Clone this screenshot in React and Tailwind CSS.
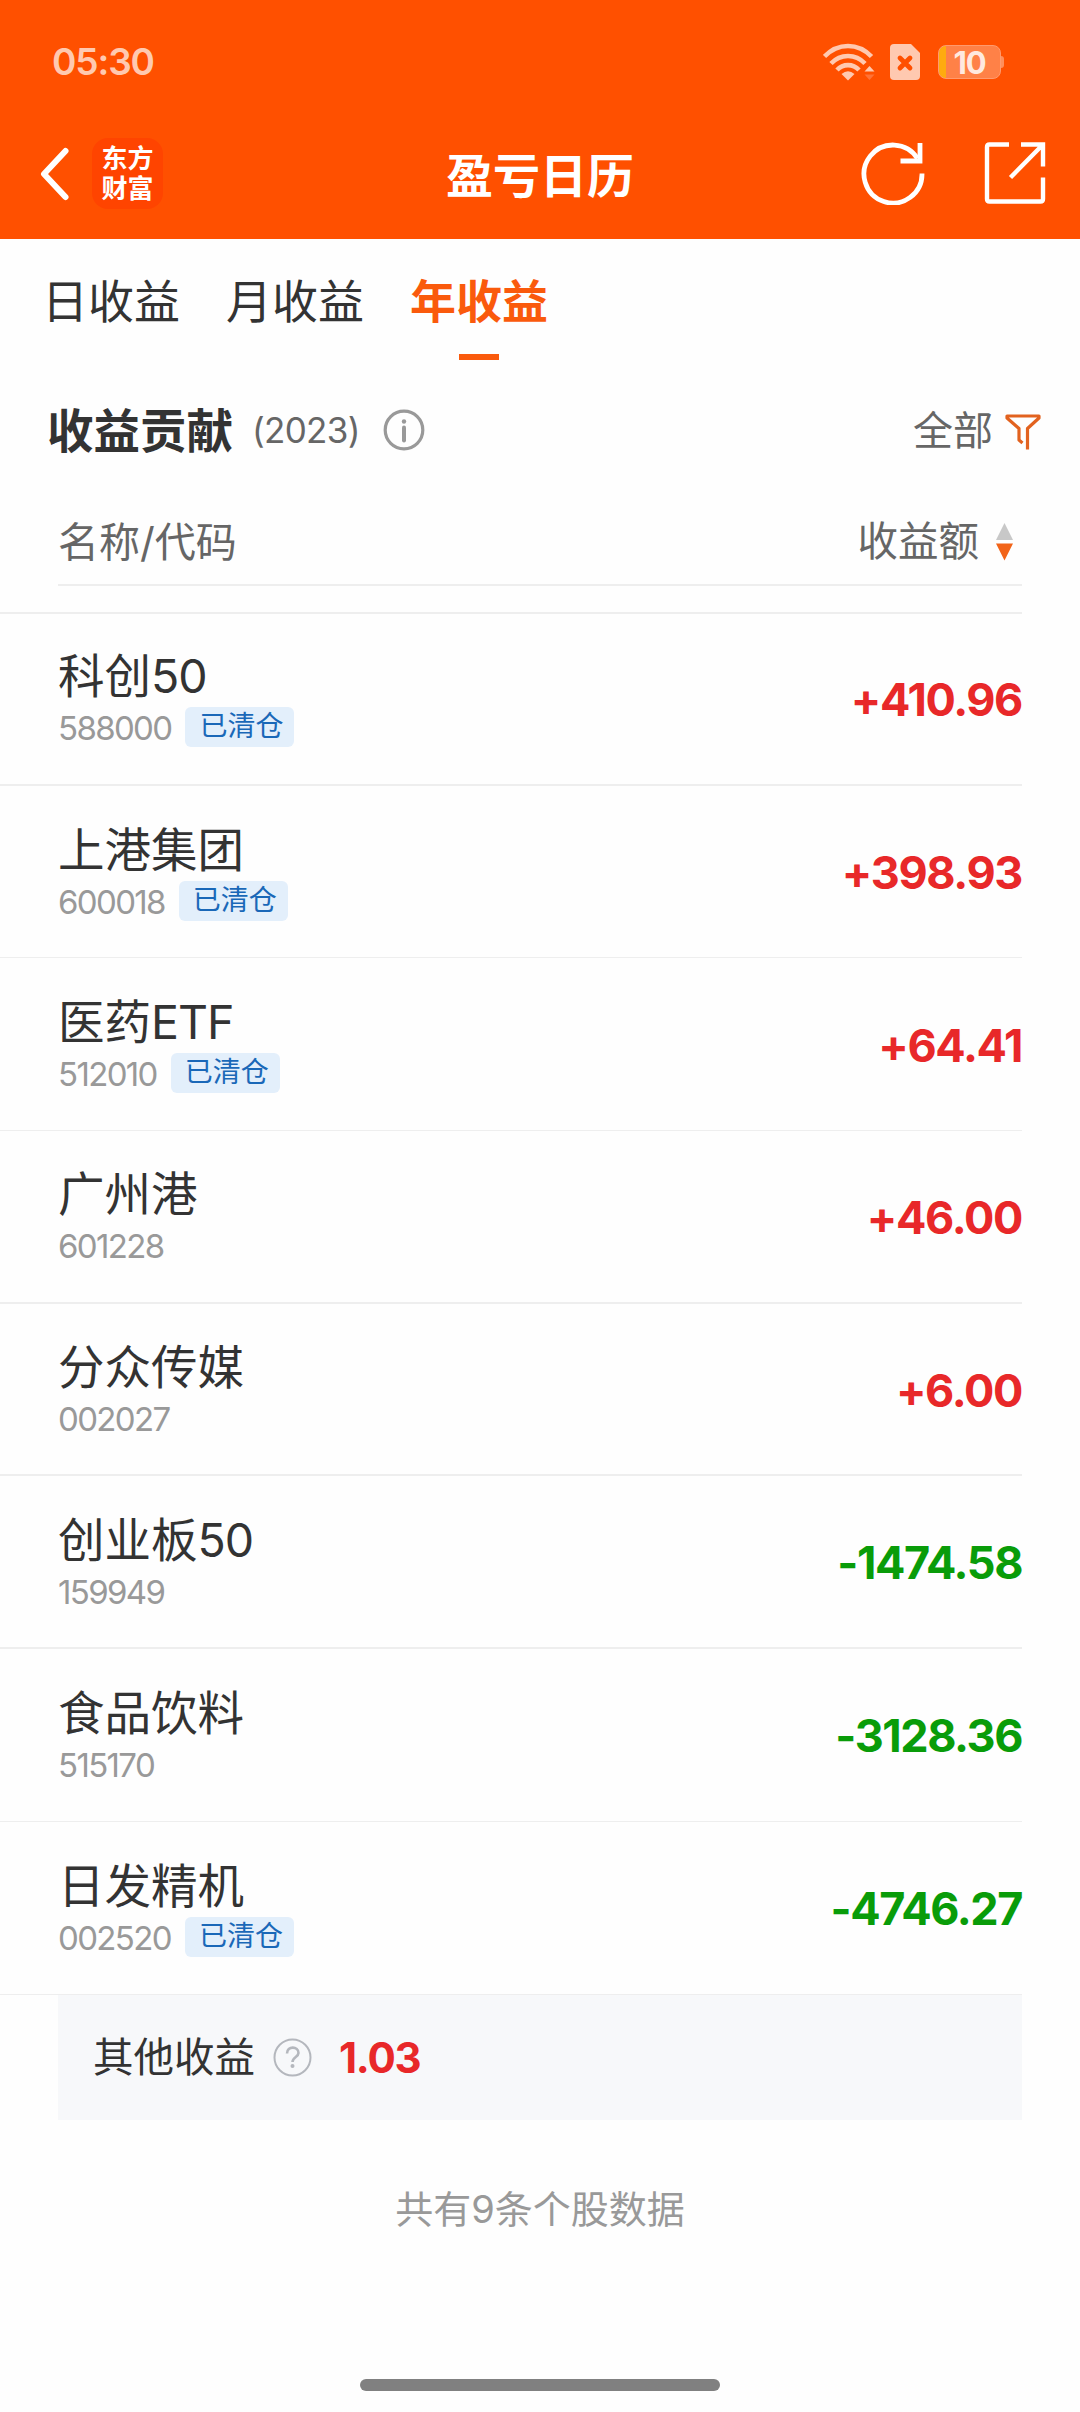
import React from "react";

const tabs = [
  { label: "日收益", active: false },
  { label: "月收益", active: false },
  { label: "年收益", active: true },
];

const stocks = [
  { name: "科创", suffix: "50", code: "588000", cleared: true, amount: "+410.96" },
  { name: "上港集团", code: "600018", cleared: true, amount: "+398.93", thin: true },
  { name: "医药", suffix: "ETF", code: "512010", cleared: true, amount: "+64.41", thin: true },
  { name: "广州港", code: "601228", cleared: false, amount: "+46.00" },
  { name: "分众传媒", code: "002027", cleared: false, amount: "+6.00" },
  { name: "创业板", suffix: "50", code: "159949", cleared: false, amount: "-1474.58" },
  { name: "食品饮料", code: "515170", cleared: false, amount: "-3128.36", thin: true },
  { name: "日发精机", code: "002520", cleared: true, amount: "-4746.27", thin: true },
];

const StatusBar = () => (
  <div className="flex h-[124px] items-center justify-between pl-[52px] pr-[76px]">
    <span className="pb-[2px] text-[37px] leading-none font-semibold tracking-[-0.03em] text-[#ffc9b0]">05:30</span>
    <div className="flex items-center">
      <svg width="52" height="38" viewBox="0 0 52 38" fill="none" stroke="#ffc9b0" strokeWidth="4.600">
        <path d="M1.500 13.500C15-.5 35-.5 48.500 13.500" />
        <path d="M8 20.500C17.500 10.500 32.500 10.500 42 20.500" />
        <path d="M14 27C20 20.500 30 20.500 36 27" />
        <path d="M18.500 31Q25 25.500 31.500 31L25 37.500Z" fill="#ffc9b0" stroke="none" />
        <path d="M41.500 28.500L46.500 23L51.500 28.500Z" fill="#ffc9b0" stroke="none" />
        <path d="M41.500 31.500L46.500 37L51.500 31.500Z" fill="#ff7337" stroke="none" />
      </svg>
      <svg className="ml-[15px]" width="30" height="36" viewBox="0 0 30 36">
        <path d="M4 0H21L30 9V32Q30 36 26 36H4Q0 36 0 32V4Q0 0 4 0Z" fill="#ffc9b0" />
        <path d="M10 14L20 24M20 14L10 24" stroke="#ff5000" strokeWidth="4.800" strokeLinecap="round" />
      </svg>
      <div className="ml-[18px] flex items-center">
        <div className="flex h-[34px] w-[63px] items-center justify-center overflow-hidden rounded-[8px] border border-[#ff9a6e] bg-linear-to-r from-[#ffab0f] from-[7px] to-[#ff8147] to-[7px] text-[31px] leading-none font-bold tracking-[-0.04em] text-[#ffe9df]">
          10
        </div>
        <div className="h-3 w-[3px] rounded-r-sm bg-[#ff8f5c]"></div>
      </div>
    </div>
  </div>
);

const NavBar = () => (
  <div className="flex h-[115px] items-start justify-between pl-[38px] pr-[34px] pt-[14px]">
    <div className="flex w-[260px] items-center">
      <svg width="32" height="56" viewBox="0 0 32 56" fill="none" stroke="#fff" strokeWidth="6" strokeLinecap="round" strokeLinejoin="round">
        <path d="M27.500 5L6 28L27.500 51" />
      </svg>
      <div className="ml-[22px] flex size-[71px] flex-col items-center justify-center rounded-[16px] bg-[#ff4400] text-[26px] leading-[30px] font-bold text-white">
        <span>东方</span>
        <span>财富</span>
      </div>
    </div>
    <h1 className="pt-[2px] pr-[4px] text-[47px] leading-[72px] font-bold text-white">盈亏日历</h1>
    <div className="flex w-[260px] justify-end gap-[59px] pt-[3px]">
      <svg width="64" height="64" viewBox="0 0 64 64" fill="none" stroke="#fff" strokeWidth="4.800">
        <path d="M61 32.500A29 29 0 1 1 56.500 17.500" />
        <path d="M59 2V20H39.500" />
      </svg>
      <svg width="62" height="64" viewBox="0 0 62 64" fill="none" stroke="#fff" strokeWidth="4.400">
        <path d="M25 3.500H5.500Q3 3.500 3 6V58Q3 60.500 5.500 60.500H56.500Q59 60.500 59 58V36.500" />
        <path d="M37 3.500H59V25.500M58 4.500L26.500 36.500" />
      </svg>
    </div>
  </div>
);

const App = () => {
  return (
    <div className="flex h-[2412px] w-[1080px] flex-col overflow-hidden bg-[#fefefe] font-['Inter','Noto_Sans_CJK_SC',sans-serif] text-[#333]">
      <header className="bg-[#ff5000]">
        <StatusBar />
        <NavBar />
      </header>

      <nav className="flex h-[123px] gap-[46px] pl-[42px] pt-[29px]">
        {tabs.map((tab) => (
          <div key={tab.label} className="flex flex-col items-center">
            <span className={tab.active ? "text-[46px] leading-[66px] font-bold text-[#fa5a0c]" : "text-[46px] leading-[66px]"}>
              {tab.label}
            </span>
            {tab.active && <span className="mt-[20px] h-[6px] w-10 bg-[#fa5a0c]"></span>}
          </div>
        ))}
      </nav>

      <section className="flex h-[136px] items-center justify-between pl-[47px] pr-[39px]">
        <div className="flex items-center">
          <h2 className="pt-[2px] text-[46.5px] leading-[66px] font-bold">收益贡献</h2>
          <span className="ml-[19px] text-[35px] leading-none tracking-[-0.02em] text-[#666]">(2023)</span>
          <svg className="ml-[23px]" width="42" height="42" viewBox="0 0 42 42" fill="none" stroke="#999">
            <circle cx="21" cy="21" r="18.800" strokeWidth="3.200" />
            <path d="M21 18.500V31.500" strokeWidth="4" strokeLinecap="round" />
            <circle cx="21" cy="12.500" r="2.200" fill="#999" stroke="none" />
          </svg>
        </div>
        <div className="flex items-center">
          <span className="pt-[2px] text-[40px] leading-[58px] text-[#666]">全部</span>
          <svg className="ml-[12px] mt-[3px]" width="36" height="37" viewBox="0 0 36 37" fill="none" stroke="#e2621f" strokeWidth="3.200" strokeLinejoin="round">
            <path d="M17.500 30L14 27V15.500L2 5V3H34V5L22.500 15.500V36.500" />
          </svg>
        </div>
      </section>

      <div className="mx-[58px] flex h-[88px] items-center justify-between border-b-2 border-[#eee] pr-[9px] pt-[2px] text-[#666]">
        <span className="text-[41px] leading-[58px]">名称/代码</span>
        <div className="flex items-center">
          <span className="text-[40.5px] leading-[58px]">收益额</span>
          <svg className="ml-[17px]" width="17" height="38" viewBox="0 0 17 38">
            <path d="M8.500 0L17 17H0Z" fill="#c8c8c8" />
            <path d="M8.500 37.500L17 20.500H0Z" fill="#f26419" />
          </svg>
        </div>
      </div>

      <ul className="mt-[26px] mr-[58px] border-t-2 border-[#eee]">
        {stocks.map((stock) => (
          <li
            key={stock.code}
            className={
              stock.thin
                ? "flex h-[172.7px] items-center justify-between border-b border-[#eee] pl-[58px]"
                : "flex h-[172.7px] items-center justify-between border-b-2 border-[#eee] pl-[58px] first:-mt-px"
            }
          >
            <div className="flex flex-col pb-px">
              <div className="text-[46.5px] leading-[56px]">
                {stock.name}
                {stock.suffix && <span className="tracking-[-0.02em]">{stock.suffix}</span>}
              </div>
              <div className="mt-[3px] flex h-10 items-center">
                <span className="pt-[3px] text-[33px] leading-none tracking-[-0.05em] text-[#999]">{stock.code}</span>
                {stock.cleared && (
                  <span className="ml-[14px] h-10 rounded-[6px] bg-[#e3effb] pr-[11px] pl-[14px] text-[28px] leading-[38px] text-[#1a68b8]">已清仓</span>
                )}
              </div>
            </div>
            <span
              className={
                stock.amount.startsWith("+")
                  ? "pt-[2px] text-[45px] leading-none font-bold tracking-[-0.03em] text-[#e82829]"
                  : "pt-[2px] text-[45px] leading-none font-bold tracking-[-0.032em] text-[#099c09]"
              }
            >
              {stock.amount}
            </span>
          </li>
        ))}
      </ul>

      <div className="mx-[58px] flex h-[125px] items-center bg-[#f7f8fa] pl-[35px]">
        <span className="pt-[2px] text-[40.5px] leading-[58px]">其他收益</span>
        <svg className="ml-[18px]" width="39" height="39" viewBox="0 0 39 39" fill="none" stroke="#b4b7bd" strokeWidth="2">
          <circle cx="19.500" cy="19.500" r="18" />
          <path d="M14 15.500C14 7.500 25.500 8 25.500 15C25.500 19 19.500 19 19.500 24" strokeWidth="2.600" />
          <circle cx="19.500" cy="28" r="2" fill="#b4b7bd" stroke="none" />
        </svg>
        <span className="ml-[27px] pt-[2px] text-[42px] leading-none font-bold tracking-[-0.03em] text-[#e82829]">1.03</span>
      </div>

      <p className="mt-[60px] text-center text-[38px] leading-[58px] text-[#999]">共有9条个股数据</p>

      <div className="mx-auto mt-auto mb-[21px] h-3 w-[360px] rounded-full bg-[#808080]"></div>
    </div>
  );
};

export default App;
